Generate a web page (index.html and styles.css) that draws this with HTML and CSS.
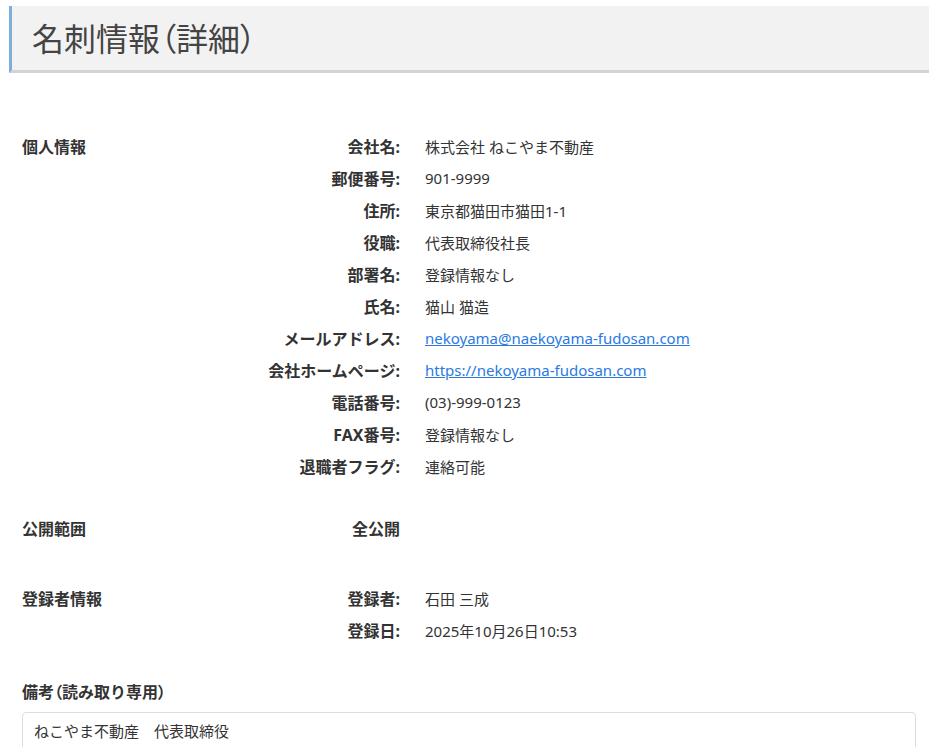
FILE: index.html
```html
<!DOCTYPE html>
<html lang="ja">
<head>
<meta charset="utf-8">
<link rel="stylesheet" href="styles.css">
</head>
<body>
<header class="page-head">
  <h1 class="page-title">名刺情報<span class="paren">（</span>詳細<span class="paren">）</span></h1>
</header>
<main class="content">
  <section class="section sec-personal">
    <div class="sec-title">個人情報</div>
    <div class="rows">
      <div class="row"><div class="label">会社名:</div><div class="value">株式会社 ねこやま不動産</div></div>
      <div class="row"><div class="label">郵便番号:</div><div class="value">901-9999</div></div>
      <div class="row"><div class="label">住所:</div><div class="value">東京都猫田市猫田1-1</div></div>
      <div class="row"><div class="label">役職:</div><div class="value">代表取締役社長</div></div>
      <div class="row"><div class="label">部署名:</div><div class="value">登録情報なし</div></div>
      <div class="row"><div class="label">氏名:</div><div class="value">猫山 猫造</div></div>
      <div class="row"><div class="label">メールアドレス:</div><div class="value"><a class="link" href="#">nekoyama@naekoyama-fudosan.com</a></div></div>
      <div class="row"><div class="label">会社ホームページ:</div><div class="value"><a class="link" href="#">https://nekoyama-fudosan.com</a></div></div>
      <div class="row"><div class="label">電話番号:</div><div class="value">(03)-999-0123</div></div>
      <div class="row"><div class="label">FAX番号:</div><div class="value">登録情報なし</div></div>
      <div class="row"><div class="label">退職者フラグ:</div><div class="value">連絡可能</div></div>
    </div>
  </section>
  <section class="section sec-public">
    <div class="sec-title">公開範囲</div>
    <div class="rows">
      <div class="row"><div class="label">全公開</div><div class="value"></div></div>
    </div>
  </section>
  <section class="section sec-reg">
    <div class="sec-title">登録者情報</div>
    <div class="rows">
      <div class="row"><div class="label">登録者:</div><div class="value">石田 三成</div></div>
      <div class="row"><div class="label">登録日:</div><div class="value">2025年10月26日10:53</div></div>
    </div>
  </section>
  <section class="notes">
    <div class="notes-title">備考<span class="paren">（</span>読み取り専用<span class="paren">）</span></div>
    <div class="notes-box">ねこやま不動産　代表取締役</div>
  </section>
</main>
</body>
</html>
```

FILE: styles.css
```css
html, body {
  margin: 0;
  padding: 0;
  background: #ffffff;
}
body {
  font-family: "Noto Sans", "Noto Sans CJK JP", sans-serif;
  color: #333333;
  font-size: 15px;
  overflow: hidden;
}
.page-head {
  margin: 6px 0 0 9px;
  height: 64px;
  background: #f2f2f2;
  border-left: 3px solid #7aafe0;
  border-bottom: 3px solid #d4d4d4;
  display: flex;
  align-items: center;
  padding-left: 20px;
}
.page-title {
  margin: 0;
  font-family: "Noto Sans CJK JP", sans-serif;
  font-weight: 400;
  font-size: 32px;
  color: #444444;
  position: relative;
  top: -1px;
}
.paren {
  font-feature-settings: "palt";
}
.content {
  padding: 0 13px 0 22px;
}
.section {
  display: grid;
  grid-template-columns: 200px 1fr;
}
.sec-personal { margin-top: 57px; }
.sec-public { margin-top: 30px; }
.sec-reg { margin-top: 38px; }
.sec-title {
  font-weight: 700;
  font-size: 16px;
  line-height: 32px;
  font-family: "Noto Sans CJK JP", sans-serif;
}
.rows {
  display: flex;
  flex-direction: column;
}
.row {
  display: grid;
  grid-template-columns: 178px 1fr;
  column-gap: 25px;
  height: 32px;
  align-items: center;
}
.label {
  text-align: right;
  font-weight: 700;
  font-size: 16px;
  font-family: "Noto Sans", "Noto Sans CJK JP", sans-serif;
  white-space: nowrap;
}
.value {
  font-size: 15px;
}
.link {
  color: #2a7ae2;
  text-decoration: underline;
}
.notes {
  margin-top: 35px;
}
.notes-title {
  font-weight: 700;
  font-size: 16px;
  line-height: 20px;
  font-family: "Noto Sans CJK JP", sans-serif;
}
.notes-box {
  margin-top: 11px;
  border: 1px solid #dddddd;
  border-radius: 4px;
  padding: 7px 11px;
  font-size: 15px;
  line-height: 22px;
  min-height: 60px;
}
```
